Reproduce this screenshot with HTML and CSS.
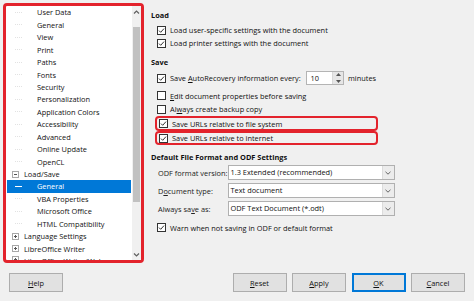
FILE: index.html
```html
<!DOCTYPE html>
<html>
  <head>
    <title>Options - Load/Save - General</title>
    <link rel="stylesheet" href="styles.css">
  </head>
  <body>
    <div class="dialog">
      <div class="main">
        <div class="tree-box">
          <ul class="tree">
            <li class="child"><span class="branch"></span>User Data</li>
            <li class="child"><span class="branch"></span>General</li>
            <li class="child"><span class="branch"></span>View</li>
            <li class="child"><span class="branch"></span>Print</li>
            <li class="child"><span class="branch"></span>Paths</li>
            <li class="child"><span class="branch"></span>Fonts</li>
            <li class="child"><span class="branch"></span>Security</li>
            <li class="child"><span class="branch"></span>Personalization</li>
            <li class="child"><span class="branch"></span>Application Colors</li>
            <li class="child"><span class="branch"></span>Accessibility</li>
            <li class="child"><span class="branch"></span>Advanced</li>
            <li class="child"><span class="branch"></span>Online Update</li>
            <li class="child"><span class="branch"></span>OpenCL</li>
            <li class="parent">
              <svg class="expander" width="7" height="7" viewBox="0 0 7 7"><rect x="0.5" y="0.5" width="6" height="6" fill="#fff" stroke="#a8a8a8"/><path d="M2 3.5h3" stroke="#555"/></svg>Load/Save
            </li>
            <li class="child selected"><span class="branch"></span>General</li>
            <li class="child"><span class="branch"></span>VBA Properties</li>
            <li class="child"><span class="branch"></span>Microsoft Office</li>
            <li class="child"><span class="branch"></span>HTML Compatibility</li>
            <li class="parent">
              <svg class="expander" width="7" height="7" viewBox="0 0 7 7"><rect x="0.5" y="0.5" width="6" height="6" fill="#fff" stroke="#a8a8a8"/><path d="M2 3.5h3M3.5 2v3" stroke="#555"/></svg>Language Settings
            </li>
            <li class="parent">
              <svg class="expander" width="7" height="7" viewBox="0 0 7 7"><rect x="0.5" y="0.5" width="6" height="6" fill="#fff" stroke="#a8a8a8"/><path d="M2 3.5h3M3.5 2v3" stroke="#555"/></svg>LibreOffice Writer
            </li>
            <li class="parent last">
              <svg class="expander" width="7" height="7" viewBox="0 0 7 7"><rect x="0.5" y="0.5" width="6" height="6" fill="#fff" stroke="#a8a8a8"/><path d="M2 3.5h3M3.5 2v3" stroke="#555"/></svg>LibreOffice Writer/Web
            </li>
          </ul>
          <div class="scrollbar">
            <div class="scroll-arrow">
              <svg width="7" height="5" viewBox="0 0 7 5"><path d="M1 3.5L3.5 1L6 3.5" fill="none" stroke="#606060" stroke-width="1.2"/></svg>
            </div>
            <div class="scroll-track"><div class="scroll-thumb"></div></div>
            <div class="scroll-arrow">
              <svg width="7" height="5" viewBox="0 0 7 5"><path d="M1 1.5L3.5 4L6 1.5" fill="none" stroke="#606060" stroke-width="1.2"/></svg>
            </div>
          </div>
        </div>

        <div class="options">
          <div class="heading heading-load">Load</div>
          <div class="check-row row-first">
            <svg class="checkbox" width="9" height="9" viewBox="0 0 9 9"><rect x="0.5" y="0.5" width="8" height="8" fill="#fff" stroke="#333"/><path d="M2 4.6L3.7 6.3L7 2.6" fill="none" stroke="#333"/></svg>
            <span>Load user-specific settings with the document</span>
          </div>
          <div class="check-row">
            <svg class="checkbox" width="9" height="9" viewBox="0 0 9 9"><rect x="0.5" y="0.5" width="8" height="8" fill="#fff" stroke="#333"/><path d="M2 4.6L3.7 6.3L7 2.6" fill="none" stroke="#333"/></svg>
            <span>Load printer settings with the document</span>
          </div>

          <div class="heading heading-save">Save</div>
          <div class="check-row spin-row">
            <svg class="checkbox" width="9" height="9" viewBox="0 0 9 9"><rect x="0.5" y="0.5" width="8" height="8" fill="#fff" stroke="#333"/><path d="M2 4.6L3.7 6.3L7 2.6" fill="none" stroke="#333"/></svg>
            <span class="spin-label">Save <u>A</u>utoRecovery information every:</span>
            <div class="spin">
              <span class="spin-value">10</span>
              <div class="spin-buttons">
                <div class="spin-btn"><svg width="5" height="3" viewBox="0 0 5 3"><path d="M0 3L2.5 0L5 3z" fill="#555"/></svg></div>
                <div class="spin-btn"><svg width="5" height="3" viewBox="0 0 5 3"><path d="M0 0L2.5 3L5 0z" fill="#555"/></svg></div>
              </div>
            </div>
            <span class="unit">minutes</span>
          </div>
          <div class="check-row row-edit">
            <svg class="checkbox" width="9" height="9" viewBox="0 0 9 9"><rect x="0.5" y="0.5" width="8" height="8" fill="#fff" stroke="#333"/></svg>
            <span><u>E</u>dit document properties before saving</span>
          </div>
          <div class="check-row row-backup">
            <svg class="checkbox" width="9" height="9" viewBox="0 0 9 9"><rect x="0.5" y="0.5" width="8" height="8" fill="#fff" stroke="#333"/></svg>
            <span>Al<u>w</u>ays create backup copy</span>
          </div>
          <div class="check-row marked marked-first">
            <svg class="checkbox" width="9" height="9" viewBox="0 0 9 9"><rect x="0.5" y="0.5" width="8" height="8" fill="#fff" stroke="#333"/><path d="M2 4.6L3.7 6.3L7 2.6" fill="none" stroke="#333"/></svg>
            <span>Save URLs relative to file system</span>
          </div>
          <div class="check-row marked marked-second">
            <svg class="checkbox" width="9" height="9" viewBox="0 0 9 9"><rect x="0.5" y="0.5" width="8" height="8" fill="#fff" stroke="#333"/><path d="M2 4.6L3.7 6.3L7 2.6" fill="none" stroke="#333"/></svg>
            <span>Save URLs relative to internet</span>
          </div>

          <div class="heading heading-default">Default File Format and ODF Settings</div>
          <div class="form-row form-first">
            <label>ODF format version:</label>
            <div class="combo">
              <span class="combo-value">1.3 Extended (recommended)</span>
              <div class="combo-btn"><svg width="6" height="4" viewBox="0 0 6 4"><path d="M0.5 0.8L3 3.2L5.5 0.8" fill="none" stroke="#666"/></svg></div>
            </div>
          </div>
          <div class="form-row">
            <label>D<u>o</u>cument type:</label>
            <div class="combo">
              <span class="combo-value">Text document</span>
              <div class="combo-btn"><svg width="6" height="4" viewBox="0 0 6 4"><path d="M0.5 0.8L3 3.2L5.5 0.8" fill="none" stroke="#666"/></svg></div>
            </div>
          </div>
          <div class="form-row">
            <label>Always sa<u>v</u>e as:</label>
            <div class="combo">
              <span class="combo-value">ODF Text Document (*.odt)</span>
              <div class="combo-btn"><svg width="6" height="4" viewBox="0 0 6 4"><path d="M0.5 0.8L3 3.2L5.5 0.8" fill="none" stroke="#666"/></svg></div>
            </div>
          </div>
          <div class="check-row row-warn">
            <svg class="checkbox" width="9" height="9" viewBox="0 0 9 9"><rect x="0.5" y="0.5" width="8" height="8" fill="#fff" stroke="#333"/><path d="M2 4.6L3.7 6.3L7 2.6" fill="none" stroke="#333"/></svg>
            <span>Warn when not saving in ODF or default format</span>
          </div>
        </div>
      </div>

      <div class="footer">
        <button class="btn"><u>H</u>elp</button>
        <div class="footer-right">
          <button class="btn"><u>R</u>eset</button>
          <button class="btn"><u>A</u>pply</button>
          <button class="btn btn-default"><u>O</u>K</button>
          <button class="btn"><u>C</u>ancel</button>
        </div>
      </div>
    </div>
  </body>
</html>
```

FILE: styles.css
```css
body {
  margin: 0;
  padding: 0;
  background-color: #f0f0f0;
  font-family: "Open Sans", "Noto Sans", sans-serif;
  font-size: 7.4px;
  color: #111;
}

u {
  text-decoration-thickness: 0.6px;
  text-underline-offset: 1px;
}

.dialog {
  width: 474px;
  height: 301px;
  overflow: hidden;
}

.main {
  display: flex;
  height: 263px;
  padding: 3px 0 0 3px;
  box-sizing: border-box;
}

/* left tree, outlined in red */
.tree-box {
  display: flex;
  width: 141px;
  height: 260px;
  border: 3px solid #e3232c;
  border-radius: 4px;
  background-color: #fff;
  box-sizing: border-box;
}

.tree {
  flex: 1;
  list-style: none;
  margin: 0;
  padding: 0.1px 0 0 0;
  overflow: hidden;
}

.tree li {
  display: flex;
  align-items: center;
  height: 12.45px;
  white-space: nowrap;
}

/* last row is only half visible, like the real list */
.tree .last {
  height: 8px;
  align-items: flex-start;
  overflow: hidden;
  padding-top: 1px;
}

.branch {
  display: inline-block;
  width: 7px;
  height: 0;
  margin: 0 15px 0 9px;
  border-top: 1px dotted #e2e2e2;
}

.parent .expander {
  margin: 0 5px 0 6px;
  flex-shrink: 0;
}

.tree .selected {
  background-color: #0078d7;
  color: #fff;
  margin: 0 1px 0 1px;
}

.selected .branch {
  margin-left: 8px;
  border-top: 1px solid #fff;
}

.scrollbar {
  display: flex;
  flex-direction: column;
  width: 9px;
  background-color: #f0f0f0;
}

.scroll-arrow {
  display: flex;
  justify-content: center;
  align-items: center;
  height: 12px;
}

.scroll-track {
  flex: 1;
  padding: 9px 1px 46px 1px;
}

.scroll-thumb {
  height: 100%;
  background-color: #c1c1c1;
}

/* right side options */
.options {
  flex: 1;
  margin-left: 7px;
}

.heading {
  font-weight: bold;
  height: 12px;
  line-height: 12px;
}

.heading-load {
  margin-top: 6px;
}

.heading-save {
  margin-top: 6.5px;
}

.heading-default {
  margin-top: 5.5px;
}

.check-row {
  display: flex;
  align-items: center;
  height: 13px;
  padding-left: 6px;
  white-space: nowrap;
}

.check-row .checkbox {
  flex-shrink: 0;
  margin-right: 4px;
}

.row-first {
  margin-top: 2.5px;
}

.spin-row {
  height: 16px;
  margin-top: 2px;
}

.spin-label {
  width: 135.5px;
}

.spin {
  display: flex;
  width: 38.5px;
  height: 14.5px;
  background-color: #fff;
  border: 1px solid #b4b4b4;
  box-sizing: border-box;
}

.spin-value {
  flex: 1;
  padding-left: 4px;
  line-height: 12.5px;
}

.spin-buttons {
  display: flex;
  flex-direction: column;
  width: 10px;
  border-left: 1px solid #d8d8d8;
}

.spin-btn {
  flex: 1;
  display: flex;
  justify-content: center;
  align-items: center;
  background-color: #e6e6e6;
}

.unit {
  margin-left: 4px;
}

.row-edit {
  margin-top: 3px;
}

.row-backup {
  margin-top: 0.5px;
}

.marked {
  width: 223px;
  margin-left: 4px;
  padding-left: 2px;
  border: 2px solid #e3232c;
  border-radius: 4px;
  box-sizing: border-box;
}

.marked-first {
  height: 15px;
  margin-top: 0.5px;
}

.marked-second {
  height: 14px;
}

.form-row {
  display: flex;
  align-items: center;
  height: 15px;
  margin-top: 3px;
}

.form-first {
  margin-top: 2.5px;
}

.form-row label {
  width: 76.5px;
  padding-left: 7px;
  box-sizing: border-box;
  color: #222;
}

.combo {
  display: flex;
  width: 167px;
  height: 15px;
  background-color: #fff;
  border: 1px solid #b0b0b0;
  box-sizing: border-box;
}

.combo-value {
  flex: 1;
  padding-left: 2px;
  line-height: 13px;
  white-space: nowrap;
}

.combo-btn {
  display: flex;
  justify-content: center;
  align-items: center;
  width: 11px;
  background-color: #ececec;
  border-left: 1px solid #dcdcdc;
}

.row-warn {
  margin-top: 5px;
}

/* bottom buttons */
.footer {
  display: flex;
  justify-content: space-between;
  padding: 10px 9px 0 9px;
}

.footer-right {
  display: flex;
  gap: 5.5px;
}

.btn {
  width: 54px;
  height: 19px;
  padding: 0;
  font-family: "Open Sans", "Noto Sans", sans-serif;
  font-size: 7.4px;
  color: #111;
  background-color: #e1e1e1;
  border: 1px solid #adadad;
  box-sizing: border-box;
}

.btn-default {
  border: 2px solid #0078d7;
}
```
